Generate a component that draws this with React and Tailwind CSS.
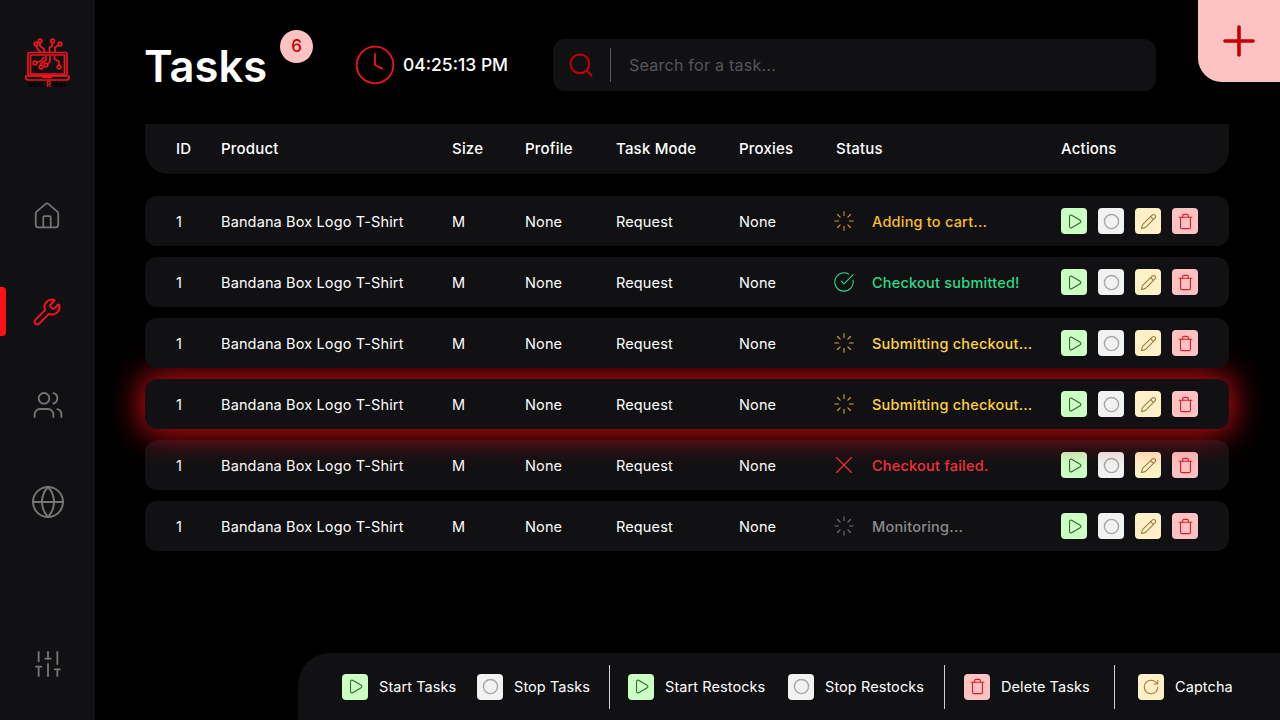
import {
  House,
  Wrench,
  Users,
  Globe,
  SlidersVertical,
  Clock,
  Search,
  Plus,
  Play,
  Circle,
  Pencil,
  Trash,
  RotateCw,
  Loader,
  CircleCheckBig,
  X,
} from "lucide-react";

const font = { fontFamily: '"Inter", "Open Sans", sans-serif' };

const tasks = [
  { status: "Adding to cart...", color: "text-[#f9bd2b]", icon: "load" },
  { status: "Checkout submitted!", color: "text-[#2fd987]", icon: "ok" },
  { status: "Submitting checkout...", color: "text-[#ffd23f]", icon: "load" },
  { status: "Submitting checkout...", color: "text-[#ffd23f]", icon: "load", glow: true },
  { status: "Checkout failed.", color: "text-[#f5323c]", icon: "fail" },
  { status: "Monitoring...", color: "text-[#8c8c8c]", icon: "load" },
];

const cols = "grid grid-cols-[76px_231px_73px_91px_123px_97px_225px_1fr] items-center";
const cell = "pt-[2px]";

const StatusIcon = ({ type, color }) => {
  if (type === "ok") return <CircleCheckBig size={22} strokeWidth={1.2} className={`${color} shrink-0`} />;
  if (type === "fail") return <X size={30} strokeWidth={0.9} className={`${color} shrink-0`} />;
  return <Loader size={22} strokeWidth={1.2} className={`${color} opacity-80 shrink-0`} />;
};

const StartBtn = () => (
  <div className="w-[26px] h-[26px] rounded-[4px] bg-[#ccffc4] flex items-center justify-center shrink-0">
    <Play size={17} strokeWidth={1.5} className="text-[#2c6b2c]" />
  </div>
);
const StopBtn = () => (
  <div className="w-[26px] h-[26px] rounded-[4px] bg-[#f2f2f2] flex items-center justify-center shrink-0">
    <Circle size={17} strokeWidth={2} className="text-[#a8a8a8]" />
  </div>
);
const EditBtn = () => (
  <div className="w-[26px] h-[26px] rounded-[4px] bg-[#fff0c8] flex items-center justify-center shrink-0">
    <Pencil size={17} strokeWidth={1.5} className="text-[#9b7b3c]" />
  </div>
);
const DeleteBtn = () => (
  <div className="w-[26px] h-[26px] rounded-[4px] bg-[#ffc2c2] flex items-center justify-center shrink-0">
    <Trash size={17} strokeWidth={1.6} className="text-[#d62028]" />
  </div>
);
const CaptchaBtn = () => (
  <div className="w-[26px] h-[26px] rounded-[4px] bg-[#fff0c8] flex items-center justify-center shrink-0">
    <RotateCw size={18} strokeWidth={1.4} className="text-[#9b7b3c]" />
  </div>
);

const Logo = () => (
  <div className="flex flex-col items-center">
    <svg width="46" height="44" viewBox="25 38 46 44" fill="none" stroke="#f0141e" strokeWidth="1.7" strokeLinecap="round" strokeLinejoin="round">
      <rect x="28" y="52.5" width="39" height="23" rx="1.5" />
      <rect x="30.5" y="55" width="34" height="19" />
      <path d="M25.5 76 H69 V77.5 Q69 80 66 80 H28.5 Q25.5 80 25.5 77.5 Z" />
      <path d="M42 76 H52 L51 77.5 H43 Z" />
      <circle cx="36" cy="44" r="1.8" />
      <circle cx="40" cy="41" r="1.8" />
      <circle cx="52.5" cy="41" r="1.8" />
      <circle cx="60" cy="44" r="1.8" />
      <path d="M36.5 46 L38 50 L40 51 V52" />
      <path d="M40 43 V46 L44 49 V52" />
      <path d="M52.5 43 L51.5 47 H49.5 V52" />
      <path d="M58.5 45 L55 47.5 V52" />
      <circle cx="35" cy="63" r="1.8" />
      <circle cx="41" cy="67" r="1.8" />
      <circle cx="46" cy="65" r="1.8" />
      <circle cx="59" cy="67" r="1.8" />
      <path d="M37 62.5 L41 61 L43.5 57.5" />
      <path d="M41 65 V63.5 L46 60 V56.5" />
      <path d="M47.5 64 L50 61.5 V56.5" />
      <path d="M59 65 V61.5 L54.5 59 V56.5" />
    </svg>
    <div className="text-[7px] leading-none font-bold tracking-[0.6px] text-black whitespace-pre -mt-px">
      Bett <span className="text-[#f0141e]">R</span> Bot
    </div>
  </div>
);

const BottomItem = ({ btn, label, className }) => (
  <div className={`flex items-center gap-[11px] ${className}`}>
    {btn}
    <span className="text-[14.5px] font-normal tracking-[0.08px] text-white whitespace-nowrap pt-[1px]">{label}</span>
  </div>
);

const Divider = ({ className }) => <div className={`w-px h-[44px] bg-[#cfcfcf] ${className}`} />;

export default function App() {
  return (
    <div className="h-screen w-full bg-black flex overflow-hidden font-medium" style={font}>
      {/* sidebar */}
      <aside className="w-[95px] shrink-0 bg-[#111114] flex flex-col items-center pt-[38px] pb-[40px]">
        <Logo />
        <House size={30} strokeWidth={1.4} className="text-[#757575] mt-[113px] -translate-x-[1px]" />
        <div className="mt-[56px] w-full h-[49px] flex items-center">
          <div className="w-[6px] h-full bg-[#ff1016] rounded-r-[4px]" />
          <Wrench size={30} strokeWidth={1.6} className="text-[#f0141e] ml-[26px]" />
        </div>
        <Users size={32} strokeWidth={1.4} className="text-[#757575] mt-[53px]" />
        <Globe size={36} strokeWidth={1.3} className="text-[#757575] mt-[63px]" />
        <SlidersVertical size={32} strokeWidth={1.4} className="text-[#757575] mt-auto" />
      </aside>

      <main className="flex-1 min-w-0 flex flex-col">
        {/* header */}
        <header className="flex items-start h-[124px] pl-[50px]">
          <div className="flex items-start mt-[30px] w-[208px]">
            <h1 className="text-[43.5px] leading-[72px] font-semibold text-white -ml-px">Tasks</h1>
            <div className="ml-[13px] w-[33px] h-[33px] rounded-full bg-[#ffc2c2] text-[#c40000] flex items-center justify-center text-[17px]">
              6
            </div>
          </div>
          <div className="flex items-center w-[200px] mt-[43px] gap-[6px]">
            <Clock size={44} strokeWidth={1} className="text-[#f0141e]" />
            <span className="text-[17.5px] text-white whitespace-nowrap pt-[1px]">04:25:13 PM</span>
          </div>
          <div className="mt-[39px] w-[603px] h-[52px] rounded-[12px] bg-[#111114] flex items-center pl-[14px]">
            <Search size={28} strokeWidth={1.7} className="text-[#c40000]" />
            <div className="w-px h-[34px] bg-[#5c5c5c] ml-[15px] mr-[18px]" />
            <span className="text-[16px] font-normal tracking-[0.25px] text-[#555558]">Search for a task...</span>
          </div>
          <button className="ml-auto w-[82px] h-[82px] bg-[#ffc2c2] rounded-bl-[24px] flex items-center justify-center">
            <Plus size={48} strokeWidth={1.8} className="text-[#c40000]" />
          </button>
        </header>

        {/* table */}
        <section className="pl-[50px] pr-[51px]">
          <div className={`${cols} h-[50px] bg-[#111114] rounded-b-[24px] text-[15px] tracking-[0.2px] text-white`}>
            <div className="pl-[31px]">ID</div>
            <div>Product</div>
            <div>Size</div>
            <div>Profile</div>
            <div>Task Mode</div>
            <div>Proxies</div>
            <div>Status</div>
            <div>Actions</div>
          </div>

          <div className="mt-[22px] flex flex-col gap-[11px]">
            {tasks.map((t, i) => (
              <div
                key={i}
                className={`${cols} h-[50px] bg-[#111114] rounded-[12px] text-[14.5px] font-normal tracking-[0.14px] text-white ${
                  i < 3 ? "relative z-20" : t.glow ? "relative z-10 shadow-[0_0_32px_4px_#d00c14]" : ""
                }`}
              >
                <div className={`${cell} pl-[31px]`}>1</div>
                <div className={`${cell} whitespace-nowrap`}>Bandana Box Logo T-Shirt</div>
                <div className={cell}>M</div>
                <div className={cell}>None</div>
                <div className={cell}>Request</div>
                <div className={cell}>None</div>
                <div className="flex items-center">
                  <div className="w-[18px] h-[18px] -ml-px flex items-center justify-center">
                    <StatusIcon type={t.icon} color={t.color} />
                  </div>
                  <span className={`${cell} ml-[19px] whitespace-nowrap font-medium tracking-[0.22px] ${t.color}`}>{t.status}</span>
                </div>
                <div className="flex gap-[11px]">
                  <StartBtn />
                  <StopBtn />
                  <EditBtn />
                  <DeleteBtn />
                </div>
              </div>
            ))}
          </div>
        </section>

        {/* bottom bar */}
        <footer className="mt-auto ml-[203px] h-[67px] bg-[#111114] rounded-tl-[32px] flex items-center pl-[44px]">
          <BottomItem btn={<StartBtn />} label="Start Tasks" className="w-[135px]" />
          <BottomItem btn={<StopBtn />} label="Stop Tasks" className="w-[132px]" />
          <Divider className="mr-[18px]" />
          <BottomItem btn={<StartBtn />} label="Start Restocks" className="w-[160px]" />
          <BottomItem btn={<StopBtn />} label="Stop Restocks" className="w-[156px]" />
          <Divider className="mr-[19px]" />
          <BottomItem btn={<DeleteBtn />} label="Delete Tasks" className="w-[150px]" />
          <Divider className="mr-[23px]" />
          <BottomItem btn={<CaptchaBtn />} label="Captcha" />
        </footer>
      </main>
    </div>
  );
}
